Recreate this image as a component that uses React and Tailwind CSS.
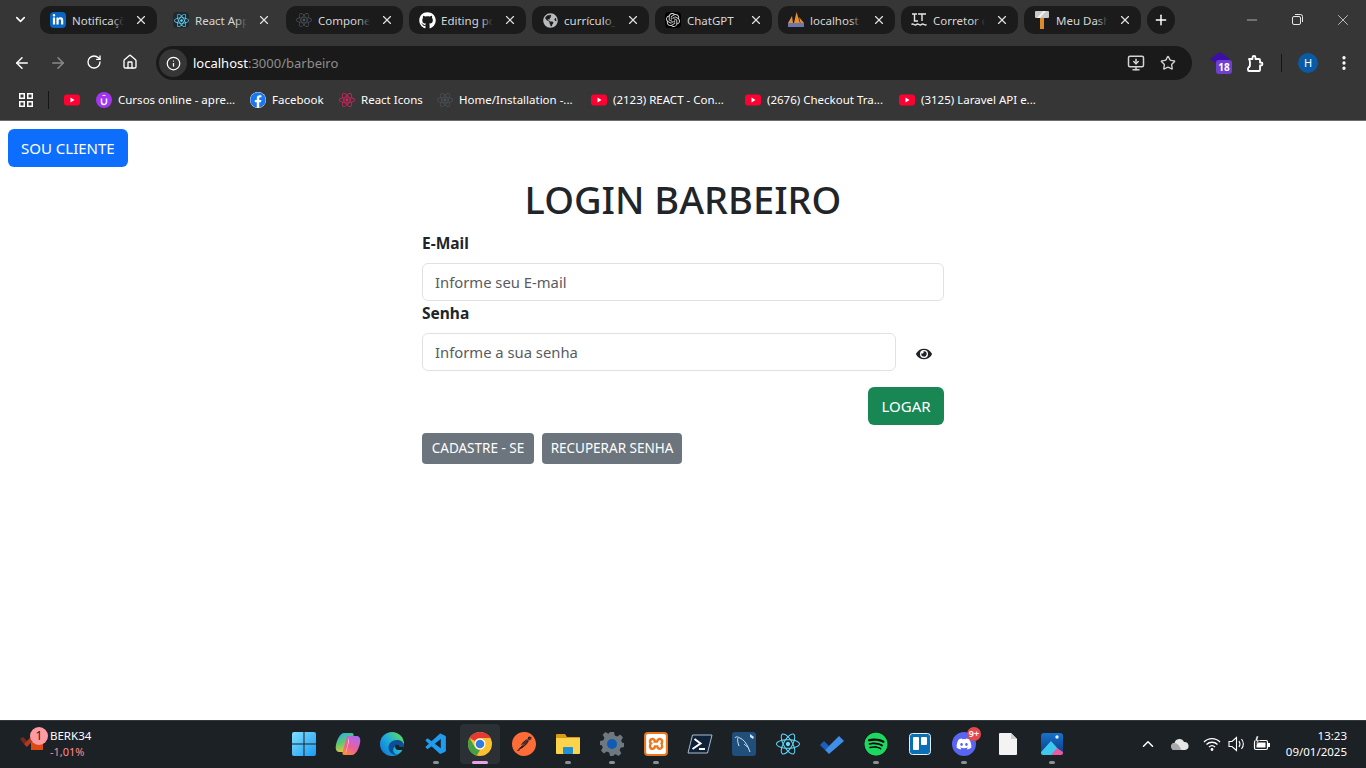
import React from "react";
import {
  ChevronDown, X, Plus, ArrowLeft, ArrowRight, RotateCw, House, Info, Star,
  EllipsisVertical, Minus, MonitorDown, ChevronUp,
} from "lucide-react";
import { FaEye, FaGithub, FaReact, FaLinkedinIn, FaFacebook, FaSpotify, FaDiscord, FaGlobeAmericas } from "react-icons/fa";
import { SiOpenai, SiPostman, SiXampp } from "react-icons/si";
import { VscVscode } from "react-icons/vsc";

const tabs = [
  { label: "Notificaçõ", icon: <span className="flex size-4 items-center justify-center rounded-sm bg-[#0a66c2]"><FaLinkedinIn size={12} className="text-white" /></span> },
  { label: "React App", active: true, icon: <span className="flex size-4 items-center justify-center rounded-sm bg-[#1f2a30]"><FaReact size={15} className="text-[#61dafb]" /></span> },
  { label: "Compone", icon: <FaReact size={16} className="text-[#4b5258]" /> },
  { label: "Editing po", icon: <FaGithub size={17} className="text-white" /> },
  { label: "currículo_", icon: <FaGlobeAmericas size={15} className="text-[#b8babc]" /> },
  { label: "ChatGPT", plain: true, icon: <span className="flex size-4 items-center justify-center rounded-sm bg-black"><SiOpenai size={14} className="text-[#d8d8d8]" /></span> },
  { label: "localhost /", icon: <PmaIcon /> },
  { label: "Corretor c", icon: <LtIcon /> },
  { label: "Meu Dash", icon: <HammerIcon /> },
];

const bookmarks = [
  { label: "", w: "w-[16px]", icon: <YtIcon /> },
  { label: "Cursos online - apre...", w: "w-[116px]", icon: <UdemyIcon /> },
  { label: "Facebook", w: "w-[51px]", icon: <FaFacebook className="text-[16px] text-[#1877f2] bg-white rounded-full" /> },
  { label: "React Icons", w: "w-[60px]", icon: <FaReact className="text-[16px] text-[#e91e63]" /> },
  { label: "Home/Installation -...", w: "w-[116px]", icon: <FaReact className="text-[16px] text-[#4b5258]" /> },
  { label: "(2123) REACT - Con...", w: "w-[116px]", icon: <YtIcon /> },
  { label: "(2676) Checkout Tra...", w: "w-[116px]", icon: <YtIcon /> },
  { label: "(3125) Laravel API e...", w: "w-[116px]", icon: <YtIcon /> },
];

function YtIcon() {
  return (
    <svg width="16" height="16" viewBox="0 0 16 16">
      <rect y="2.500" width="16" height="11" rx="3" fill="#ff0033" />
      <path d="M6.500 5.500v5l4-2.500z" fill="#fff" />
    </svg>
  );
}

function UdemyIcon() {
  return (
    <svg width="16" height="16" viewBox="0 0 16 16">
      <circle cx="8" cy="8" r="8" fill="#a435f0" />
      <path d="M5.500 6.500v3.500a2.500 2.500 0 0 0 5 0V6.500" stroke="#fff" strokeWidth="1.500" fill="none" />
      <path d="M8 2.800l2.200 1.300H5.800z" fill="#fff" />
    </svg>
  );
}

function PmaIcon() {
  return (
    <svg width="16" height="16" viewBox="0 0 16 16">
      <path d="M0 11L4 4l1 7zM6 11L8.500 0 12 11zM12.500 11L11 5l5 6z" fill="#e8912d" />
      <rect y="11" width="16" height="4" fill="#6c78af" />
    </svg>
  );
}

function LtIcon() {
  return (
    <svg width="16" height="16" viewBox="0 0 16 16" fill="none" stroke="#e8e8e8" strokeWidth="1.400">
      <path d="M1 2h5M3.500 2v7H7M7 2h8M11 2v7" />
      <path d="M0.500 12.500c2-2 3 2 5 0s3 2 5 0 3 2 5 0" />
    </svg>
  );
}

function HammerIcon() {
  return (
    <svg width="16" height="18" viewBox="0 0 16 18">
      <rect x="6" y="6" width="4" height="12" fill="#dd8a2d" />
      <rect x="1" y="0" width="14" height="7" rx="1" fill="#c9c9c9" />
      <path d="M3 7l6-7h3L6 7z" fill="#f0f0f0" />
    </svg>
  );
}

function Tab({ label, icon, active, plain }) {
  const bg = active ? "bg-[#363636]" : "bg-[#1b1b1b]";
  const fade = active ? "to-[#363636]" : "to-[#1b1b1b]";
  return (
    <div className={`${bg} relative flex h-7 w-[117px] items-center rounded-[10px] pl-[9px] pr-[8px]`}>
      <span className="flex w-[18px] shrink-0 items-center justify-center">{icon}</span>
      <span className="relative ml-[5px] mt-px w-[60px] whitespace-nowrap text-[11.500px] text-[#d6d6d6]">
        {label}
        {!plain && <span className={`absolute inset-y-0 right-0 w-5 bg-linear-to-r from-transparent ${fade} to-60%`} />}
      </span>
      <X className="ml-auto mr-[1px] text-[#e2e2e2]" size={14} strokeWidth={2} />
    </div>
  );
}

function TabStrip() {
  return (
    <div className="flex h-10 items-start pt-1.5">
      <div className="flex w-10 justify-center pt-1.5">
        <ChevronDown size={15} strokeWidth={2.500} className="text-white" />
      </div>
      <div className="flex gap-1.5">
        {tabs.map((t) => (
          <Tab key={t.label} {...t} />
        ))}
        <div className="flex size-7 items-center justify-center rounded-full bg-[#1b1b1b]">
          <Plus size={16} strokeWidth={2.200} className="text-white" />
        </div>
      </div>
      <div className="ml-auto flex w-[138px] text-[#e8e8e8]">
        <div className="flex w-[46px] justify-center pl-px pt-[6px]"><Minus size={16} strokeWidth={1} /></div>
        <div className="flex w-[46px] justify-center pt-[8px]"><RestoreIcon /></div>
        <div className="flex w-[46px] justify-center pt-[5px]"><X size={18} strokeWidth={1} /></div>
      </div>
    </div>
  );
}

function RestoreIcon() {
  return (
    <svg width="11" height="11" viewBox="0 0 11 11" fill="none" stroke="currentColor">
      <rect x="0.500" y="2.500" width="8" height="8" rx="1.500" />
      <path d="M3 0.500h5.500a2 2 0 0 1 2 2V8" />
    </svg>
  );
}

function PuzzleIcon() {
  return (
    <svg width="17" height="17" viewBox="0 0 17 17" fill="none" stroke="#fff" strokeWidth="1.800" strokeLinejoin="round" className="ml-[13px] shrink-0">
      <path d="M1.500 4h4V2.500a1.500 1.500 0 0 1 3 0V4h3.500a1 1 0 0 1 1 1v2.500h1a1.500 1.500 0 0 1 0 3h-1V15a1 1 0 0 1-1 1H2a1 1 0 0 1-1-1v-2.500" />
      <path d="M1 12.500c2 0 2-1.500 2-4s0-4-1.500-4.500" />
    </svg>
  );
}

function Toolbar() {
  return (
    <div className="flex h-[46px] items-center">
      <div className="flex w-[148px] pl-1 text-white">
        <div className="flex w-9 justify-center"><ArrowLeft size={18} strokeWidth={2} /></div>
        <div className="flex w-9 justify-center text-[#8a8a8a]"><ArrowRight size={18} strokeWidth={2} /></div>
        <div className="flex w-9 justify-center"><RotateCw size={16} strokeWidth={2} /></div>
        <div className="flex w-9 justify-center"><House size={16} strokeWidth={2} /></div>
      </div>
      <div className="ml-2 flex h-[34px] w-[1036px] items-center rounded-full bg-[#1a1a1a] pl-[3px] pr-4">
        <div className="flex size-7 items-center justify-center rounded-full bg-[#363636]">
          <Info size={15} className="text-white" />
        </div>
        <span className="ml-[6px] mt-px text-[13px] text-white">
          localhost<span className="text-[#8e8e8e]">:3000/barbeiro</span>
        </span>
        <MonitorDown size={18} className="ml-auto text-[#d4d4d4]" />
        <Star size={16} className="ml-[15px] text-[#d4d4d4]" />
      </div>
      <div className="relative ml-[18px] flex h-5 w-[24px]">
        <svg width="20" height="14" viewBox="0 0 20 14" className="mt-[-1px]"><path d="M10 0l10 7-10 7L0 7z" fill="#3d0ea8" /></svg>
        <span className="absolute left-[6px] top-[7px] flex h-[14px] w-4 items-center justify-center rounded-[3px] bg-[#6f3fd0] text-[10px] font-bold text-white">18</span>
      </div>
      <PuzzleIcon />
      <div className="ml-[17px] h-[18px] w-px bg-[#151515]" />
      <div className="ml-[16px] flex size-5 items-center justify-center rounded-full bg-[#0b5aa5] text-[11px] text-white">H</div>
      <EllipsisVertical size={18} strokeWidth={2.400} className="ml-[17px] text-white" />
    </div>
  );
}

function BookmarksBar() {
  return (
    <div className="flex h-[35px] items-start border-b border-[#6d6d6d] pt-[6px]">
      <div className="flex h-[16px] w-[52px] items-center pl-[19px]">
        <AppsIcon />
        <div className="ml-[15px] h-[18px] w-px shrink-0 bg-[#151515]" />
      </div>
      <div className="ml-[12px] flex items-center gap-4">
        {bookmarks.map((b, i) => (
          <div key={i} className="flex h-4 items-center gap-[6px]">
            {b.icon}
            {b.label && <span className={`${b.w} whitespace-nowrap text-[11.500px] text-white`}>{b.label}</span>}
          </div>
        ))}
      </div>
    </div>
  );
}

function AppsIcon() {
  return (
    <svg className="shrink-0" width="14" height="14" viewBox="0 0 14 14" fill="none" stroke="#fff" strokeWidth="1.500">
      <rect x="0.750" y="0.750" width="4.500" height="4.500" />
      <rect x="8.750" y="0.750" width="4.500" height="4.500" />
      <rect x="0.750" y="8.750" width="4.500" height="4.500" />
      <rect x="8.750" y="8.750" width="4.500" height="4.500" />
    </svg>
  );
}

function LoginPage() {
  return (
    <main className="min-h-0 flex-1 overflow-hidden bg-white p-2 text-[#212529]">
      <button className="h-[38px] rounded-md bg-[#0d6efd] px-[13px] text-[15px] text-white">SOU CLIENTE</button>
      <div className="mx-auto mt-2 w-[522px]">
        <h1 className="mb-2 pt-px text-center text-[38px] font-medium leading-[47px]">LOGIN BARBEIRO</h1>
        <label className="mb-2 block text-[15.500px] font-bold leading-6">E-Mail</label>
        <input
          placeholder="Informe seu E-mail"
          className="block h-[38px] w-full rounded-md border border-[#dee2e6] px-3 text-[14.800px] placeholder:text-[#595c5f]"
        />
        <label className="mb-2 block text-[15.500px] font-bold leading-6">Senha</label>
        <div className="flex">
          <input
            placeholder="Informe a sua senha"
            className="block h-[38px] w-[474px] rounded-md border border-[#dee2e6] px-3 text-[14.800px] placeholder:text-[#595c5f]"
          />
          <button className="flex flex-1 items-center justify-center pl-2 pt-[4px]">
            <FaEye size={16} className="text-[#212529]" />
          </button>
        </div>
        <div className="mt-4 flex justify-end">
          <button className="h-[38px] w-[76px] rounded-md bg-[#198754] text-[15px] text-white">LOGAR</button>
        </div>
        <div className="mt-2 flex gap-2">
          <button className="h-[31px] w-[112px] rounded bg-[#6c757d] text-[13.500px] text-white">CADASTRE - SE</button>
          <button className="h-[31px] w-[140px] rounded bg-[#6c757d] text-[13.500px] text-white">RECUPERAR SENHA</button>
        </div>
      </div>
    </main>
  );
}

function WinIcon() {
  return (
    <svg width="24" height="24" viewBox="0 0 24 24">
      <defs>
        <linearGradient id="win" x1="0" y1="0" x2="1" y2="1">
          <stop offset="0" stopColor="#7fe0ff" />
          <stop offset="1" stopColor="#1a9af2" />
        </linearGradient>
      </defs>
      <path d="M0 2a2 2 0 0 1 2-2h9.500v11.500H0zM12.500 0H22a2 2 0 0 1 2 2v9.500H12.500zM0 12.500h11.500V24H2a2 2 0 0 1-2-2zM12.500 12.500H24V22a2 2 0 0 1-2 2h-9.500z" fill="url(#win)" />
    </svg>
  );
}

function CopilotIcon() {
  return (
    <svg width="26" height="24" viewBox="0 0 26 24">
      <defs>
        <linearGradient id="cop1" x1="0.200" y1="0" x2="0.600" y2="1">
          <stop offset="0" stopColor="#25b0e8" />
          <stop offset="0.500" stopColor="#62c86a" />
          <stop offset="1" stopColor="#f5c33c" />
        </linearGradient>
        <linearGradient id="cop2" x1="0.800" y1="0" x2="0.300" y2="1">
          <stop offset="0" stopColor="#a86cf0" />
          <stop offset="0.600" stopColor="#ec5f9c" />
          <stop offset="1" stopColor="#f7873c" />
        </linearGradient>
      </defs>
      <path d="M9 1h8c1 0 2 1 1.500 3L14 20H4C1.500 20 0 17 1 13 2 8 5 1 9 1z" fill="url(#cop1)" />
      <path d="M17 23H9c-1 0-2-1-1.500-3L12 4h10c2.500 0 4 3 3 7-1 5-4 12-8 12z" fill="url(#cop2)" />
      <path d="M13.500 6c.500 1 .500 3 0 5l-2 8c-.300 1-.800 2-1.500 2.500 1-2 1.500-4 2-6l1-5c.200-1.500.400-3 .500-4.500z" fill="#fbe3f0" />
    </svg>
  );
}

function EdgeIcon() {
  return (
    <svg width="24" height="24" viewBox="0 0 24 24">
      <defs>
        <linearGradient id="edge" x1="0.900" y1="0.200" x2="0.100" y2="0.800">
          <stop offset="0" stopColor="#58d66a" />
          <stop offset="0.500" stopColor="#1fb0d8" />
          <stop offset="1" stopColor="#1480dc" />
        </linearGradient>
      </defs>
      <circle cx="12" cy="12" r="12" fill="url(#edge)" />
      <path d="M24 13.500c0-3.500-3.500-5.500-7-5.500-5 0-8.500 3.500-8.500 7.500 0 4 3.500 8 9 7.500-3.500-1-5-4-4-6.500 1-2.500 3.500-3 5-1.500.5.500.5 1 .5 1.500H24z" fill="#0b4f96" />
      <path d="M15.500 13c2.500-1 4 .5 4 2H24l-1 3h-4c-1 0-3 0-3.500-1.500-.500-1.500-.500-2.500 0-3.500z" fill="#1c2126" />
    </svg>
  );
}

function ChromeIcon() {
  return (
    <svg width="24" height="24" viewBox="0 0 24 24">
      <circle cx="12" cy="12" r="12" fill="#fbc02d" />
      <path d="M12 0a12 12 0 0 1 10.400 6H12a6 6 0 0 0-5.200 3L1.600 6A12 12 0 0 1 12 0z" fill="#e53935" />
      <path d="M1.600 6L6.800 15a6 6 0 0 0 5.200 3l-3.200 5.600A12 12 0 0 1 1.600 6z" fill="#43a047" />
      <circle cx="12" cy="12" r="5.500" fill="#fff" />
      <circle cx="12" cy="12" r="4.300" fill="#2f7de1" />
    </svg>
  );
}

function FolderIcon() {
  return (
    <svg width="24" height="24" viewBox="0 0 24 24">
      <path d="M0 3a1 1 0 0 1 1-1h8l2 3h13v3H0z" fill="#d99a14" />
      <rect y="6" width="24" height="16" rx="1" fill="#fbd44b" />
      <rect x="7" y="15" width="10" height="7" rx="1" fill="#1f8fd8" />
    </svg>
  );
}

function GearIcon() {
  return (
    <svg width="24" height="24" viewBox="0 0 24 24">
      <path d="M10 0h4l.800 3.400 2.400 1 3-1.800 2.800 2.800-1.800 3 1 2.400L24 11v4l-3.400.800-1 2.400 1.800 3-2.800 2.800-3-1.800-2.400 1L14 24h-4l-.800-3.400-2.400-1-3 1.800L1 18.600l1.800-3-1-2.400L0 13V9l3.400-.800 1-2.400-1.800-3L5.400 0l3 1.800z" fill="#6e7880" />
      <circle cx="12" cy="12" r="5" fill="#0f5cb8" />
    </svg>
  );
}

function PwshIcon() {
  return (
    <svg width="26" height="20" viewBox="0 0 26 20">
      <path d="M5.500 1h19.500l-4.500 18H1z" fill="#0f2238" stroke="#a9bdd4" strokeWidth="1" />
      <path d="M7.500 5l6 4.500-8 5.500" fill="none" stroke="#fff" strokeWidth="2" />
      <path d="M12 15h6" stroke="#fff" strokeWidth="2" />
    </svg>
  );
}

function MysqlIcon() {
  return (
    <svg width="24" height="24" viewBox="0 0 24 24">
      <rect width="24" height="24" rx="3" fill="#1f4f7a" />
      <path d="M3 6c1-2 3-1 5 0 4 2 6 5 8 9l2 5M6 6c-1 2 0 5 1 8M16 15c-2-1-3-2-4-3" fill="none" stroke="#d5e4f0" strokeWidth="1" />
      <path d="M18 2l4 3-1 2-3-2z" fill="#d5e4f0" />
    </svg>
  );
}

function TrelloIcon() {
  return (
    <svg width="22" height="22" viewBox="0 0 22 22">
      <rect x="0.500" y="0.500" width="21" height="21" rx="3" fill="#0b6fb8" stroke="#dff0fa" />
      <rect x="4" y="4" width="6" height="13" rx="1" fill="#fff" />
      <rect x="12" y="4" width="6" height="8" rx="1" fill="#fff" />
    </svg>
  );
}

function TodoIcon() {
  return (
    <svg width="24" height="24" viewBox="0 0 24 24">
      <path d="M0 13l4-4 5 5-4 4z" fill="#1a5fbf" />
      <path d="M5 18L19 4l5 5L9 22z" fill="#3f8fe8" />
    </svg>
  );
}

function FileIcon() {
  return (
    <svg width="18" height="22" viewBox="0 0 18 22">
      <path d="M0 1a1 1 0 0 1 1-1h11l6 6v15a1 1 0 0 1-1 1H1a1 1 0 0 1-1-1z" fill="#f3f3f3" />
      <path d="M12 0l6 6h-6z" fill="#cfcfcf" />
    </svg>
  );
}

function PhotosIcon() {
  return (
    <svg width="22" height="22" viewBox="0 0 22 22">
      <defs>
        <linearGradient id="ph" x1="0" y1="0" x2="0" y2="1">
          <stop offset="0" stopColor="#1773c9" />
          <stop offset="1" stopColor="#0a3a85" />
        </linearGradient>
      </defs>
      <rect width="22" height="22" rx="3" fill="url(#ph)" />
      <circle cx="16" cy="4" r="1.700" fill="#dff3ff" />
      <path d="M0 19L10 8l8 9-3 5H2a2 2 0 0 1-2-2z" fill="#3ec8ee" />
      <path d="M10 22l6-7 6 4v1a2 2 0 0 1-2 2z" fill="#e85a9c" />
    </svg>
  );
}

function DiscordIcon() {
  return (
    <span className="relative flex size-6 items-center justify-center rounded-full bg-[#5865f2]">
      <FaDiscord size={16} className="text-white" />
      <span className="absolute -right-[5px] -top-[5px] flex h-[14px] w-[14px] items-center justify-center rounded-full bg-[#e5484d] text-[9px] font-semibold text-white">9+</span>
    </span>
  );
}

const apps = [
  { icon: <WinIcon /> },
  { icon: <CopilotIcon /> },
  { icon: <EdgeIcon /> },
  { icon: <VscVscode size={25} className="text-[#1f9cf0]" />, dot: true },
  { icon: <ChromeIcon />, dot: true, active: true },
  { icon: <SiPostman size={24} className="text-[#ff6c37]" /> },
  { icon: <FolderIcon />, dot: true },
  { icon: <GearIcon />, dot: true },
  { icon: <span className="flex size-6 items-center justify-center rounded-sm bg-[#e8771f]"><SiXampp size={20} className="text-white" /></span>, dot: true },
  { icon: <PwshIcon /> },
  { icon: <MysqlIcon /> },
  { icon: <FaReact size={24} className="text-[#61dafb]" /> },
  { icon: <TodoIcon /> },
  { icon: <FaSpotify size={24} className="rounded-full bg-black text-[#1ed760]" />, dot: true },
  { icon: <TrelloIcon /> },
  { icon: <DiscordIcon />, dot: true },
  { icon: <FileIcon /> },
  { icon: <PhotosIcon />, dot: true },
];

function TrayIcons() {
  return (
    <div className="flex items-center">
      <ChevronUp size={18} strokeWidth={2} />
      <svg width="18" height="12" viewBox="0 0 18 12" className="ml-[14px]">
        <path d="M4 12a3.500 3.500 0 0 1-.500-7A5 5 0 0 1 13 4a4 4 0 0 1 1 8z" fill="#e6e6e6" />
        <path d="M4 12a3.500 3.500 0 0 1-.500-7c3 0 5 3 7 7z" fill="#a9a9a9" />
      </svg>
      <svg width="18" height="14" viewBox="0 0 18 14" fill="none" stroke="#fff" strokeWidth="1.300" className="ml-[14px]">
        <path d="M1 5c4.500-4.500 11.500-4.500 16 0M3.500 7.500c3-3 8-3 11 0M6 10c1.700-1.500 4.300-1.500 6 0" />
        <circle cx="9" cy="12.500" r="0.800" fill="#fff" />
      </svg>
      <svg width="18" height="16" viewBox="0 0 18 16" fill="none" stroke="#fff" strokeWidth="1.100" className="ml-[7px]">
        <path d="M1 5.500h3L8.500 1.500v13L4 10.500H1z" />
        <path d="M11 5c1.200 1.800 1.200 4.200 0 6M13.500 3c2.200 3 2.200 7 0 10" />
      </svg>
      <svg width="18" height="16" viewBox="0 0 18 16" className="ml-[7px]">
        <rect x="1.500" y="4.500" width="13" height="9" rx="1.500" fill="none" stroke="#fff" strokeWidth="1.200" />
        <rect x="3.500" y="6.500" width="9" height="5" fill="#fff" />
        <rect x="15" y="7" width="2" height="4" fill="#fff" />
        <path d="M3.500 0L2 5h2l-1 4 3.500-5H4.500l1-4z" fill="#fff" stroke="#1c2126" strokeWidth="0.500" />
      </svg>
    </div>
  );
}

function Taskbar() {
  return (
    <footer className="flex h-[48px] shrink-0 items-center border-t border-[#35383b] bg-[#1c2126] pb-px text-white">
      <div className="flex w-[282px] items-center pl-[20px]">
        <div className="relative h-[24px] w-[24px]">
          <svg width="24" height="24" viewBox="0 0 24 24">
            <path d="M0 7l3-2 4 4-3 3z" fill="#7a2a1c" />
            <path d="M4 12L14 2l2 3L7 15z" fill="#b8381c" />
            <rect x="11" y="10" width="12" height="8" fill="#dc4a12" />
          </svg>
          <span className="absolute -top-[5px] left-[10px] flex size-[18px] items-center justify-center rounded-full bg-[#ff9aa2] text-[12px] text-[#222]">1</span>
        </div>
        <div className="ml-[6px] -mt-px text-[11.500px] leading-4">
          <div>BERK34</div>
          <div className="text-[11px] text-[#ff8a94]">-1,01%</div>
        </div>
      </div>
      <div className="flex">
        {apps.map((a, i) => (
          <div key={i} className="relative flex h-10 w-11 items-center justify-center">
            <div className={`${a.active ? "bg-[#2b3035]" : ""} flex size-10 items-center justify-center rounded`}>{a.icon}</div>
            {a.dot && <span className={`absolute bottom-0 left-1/2 h-[3px] -translate-x-1/2 rounded-full ${a.active ? "w-4 bg-[#e6a3e0]" : "w-[6px] bg-[#8b9094]"}`} />}
          </div>
        ))}
      </div>
      <div className="flex flex-1 items-center pl-[65px]">
        <TrayIcons />
        <div className="ml-auto pr-[19px] text-right text-[11.500px] leading-4">
          <div>13:23</div>
          <div>09/01/2025</div>
        </div>
      </div>
    </footer>
  );
}

export default function App() {
  return (
    <div className="flex h-[768px] w-[1366px] flex-col overflow-hidden font-['Noto_Sans',sans-serif]">
      <header className="shrink-0 bg-[#363636]">
        <TabStrip />
        <Toolbar />
        <BookmarksBar />
      </header>
      <LoginPage />
      <Taskbar />
    </div>
  );
}
